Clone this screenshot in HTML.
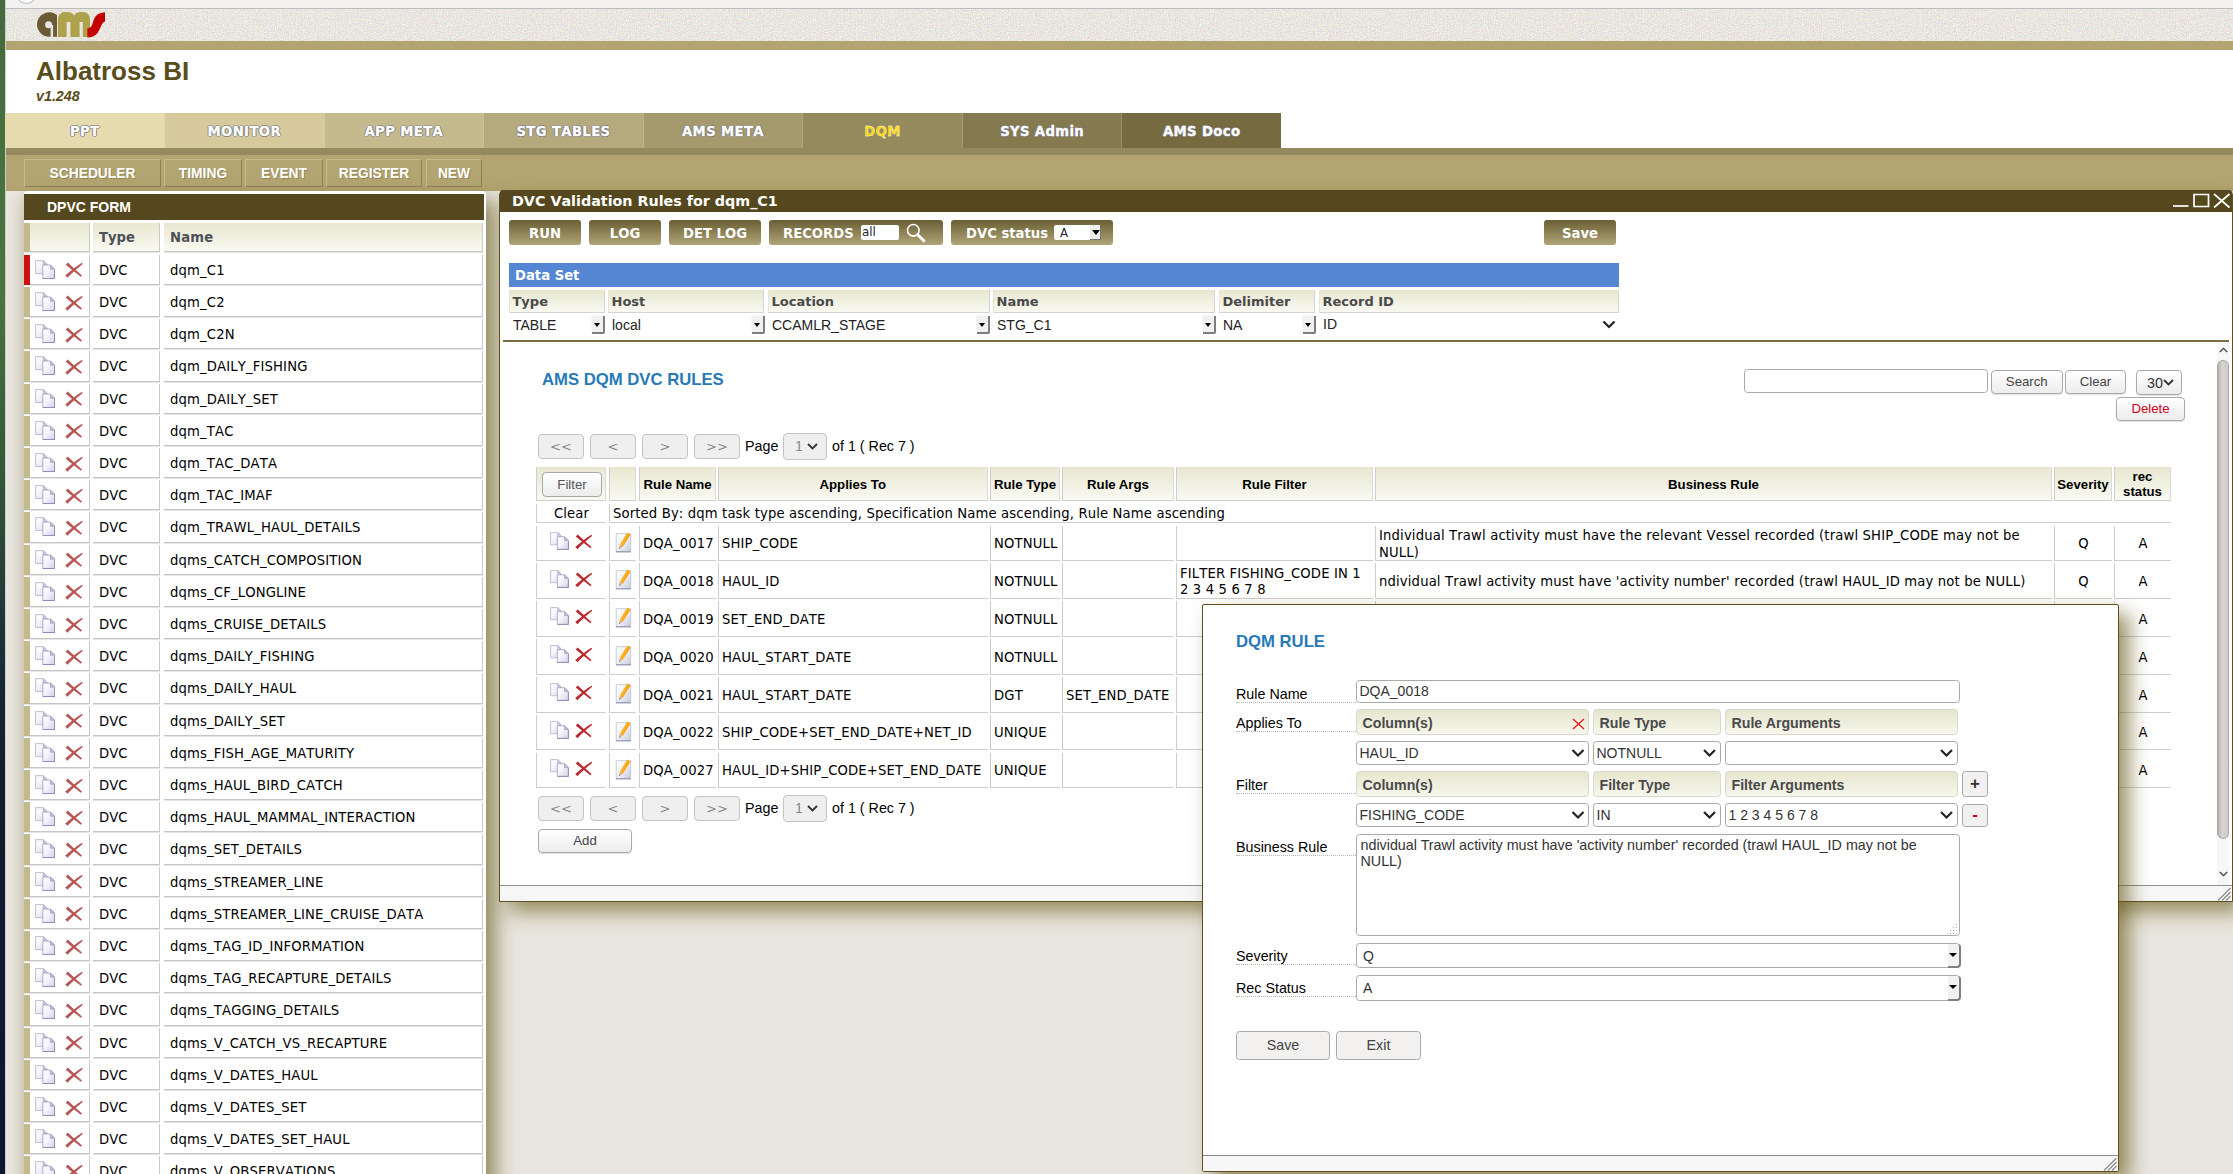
<!DOCTYPE html>
<html lang="en">
<head>
<meta charset="utf-8">
<title>Albatross BI</title>
<style>
*{box-sizing:border-box;margin:0;padding:0}
html,body{width:2233px;height:1174px;overflow:hidden}
body{position:relative;background:#e9e6df;font-family:"Liberation Sans",sans-serif;font-size:14.3px;color:#000}
.abs{position:absolute}
.dv{font-family:"DejaVu Sans","Liberation Sans",sans-serif;font-size:13.2px;font-kerning:none}
#stripe{left:0;top:0;width:6px;height:1174px;background:linear-gradient(#456a3e 0,#48753f 25%,#2f4f38 43.7%,#1f3538 52.8%,#152434 60%,#101c30 68%,#0f1630 100%);border-right:1px solid #cfcdc8}
#chrome{left:6px;top:0;width:2227px;height:9px;background:#f3f1ef;border-bottom:1px solid #bcbcbc;overflow:hidden}
#chrome i{position:absolute;left:9.5px;top:-19.5px;width:21.5px;height:23px;border:1px solid #c4c4c4;border-radius:50%;background:#fbfbfb}
#texture{left:6px;top:9px;width:2227px;height:32px;background:#e9e6e0}
#tan1{left:6px;top:41px;width:2227px;height:9px;background:#b3a571}
#white{left:6px;top:50px;width:2227px;height:98px;background:#fff}
#title{left:36px;top:56px;font-size:26px;font-weight:bold;color:#5a4d1c;line-height:30px;white-space:nowrap}
#ver{left:36px;top:87px;font-size:14.3px;font-weight:bold;font-style:italic;color:#5a4d1c;line-height:18px}
#nav{left:5.4px;top:113px;height:35px;width:1275.6px;display:flex}
#nav div{flex:1 1 0;height:35px;line-height:37px;font-kerning:none;text-align:center;font-family:"DejaVu Sans",sans-serif;font-weight:bold;font-size:13.2px;letter-spacing:.4px;color:#fff;-webkit-text-stroke:.3px #fff;text-shadow:1px 0 0 #777,-1px 0 0 #777,0 1px 0 #777,0 -1px 0 #777;border-left:1px solid rgba(255,255,255,.25)}
#nav div:first-child{border-left:0}
#dark{left:6px;top:148px;width:2227px;height:7px;background:#958a5e}
#tan2{left:6px;top:155px;width:2227px;height:36px;background:#b3a571}
.sub{top:159px;height:28px;line-height:27px;text-align:center;color:#fff;font-weight:bold;font-size:13.8px;border:1px solid;border-color:#c7bb8b #8d8152 #8d8152 #c7bb8b;text-shadow:1px 1px 0 rgba(90,77,28,.35)}
/* left panel */
#lp{left:24px;top:191px;width:462px;height:1000px;background:#fff;border-radius:4px 4px 0 0;box-shadow:10px 10px 20px rgba(100,85,20,.62),-6px 6px 12px rgba(100,85,20,.12)}
#lph{left:24px;top:194px;width:460px;height:25.5px;background:#56481e;color:#fff;font-weight:bold;font-size:14px;line-height:27.5px;padding-left:23px;overflow:hidden}
.lc{height:30.3px;line-height:31px;border-right:1px solid #cacaca;border-bottom:1px solid #c6c6c6;box-shadow:0 1px 0 #e6e6e6;white-space:nowrap;overflow:hidden}
.lc1{left:24px;width:66px;border:0;--st:#c3b98b;background:linear-gradient(90deg,var(--st) 0,var(--st) 6px,transparent 6px),linear-gradient(0deg,#c6c6c6 0,#c6c6c6 1px,transparent 1px),linear-gradient(270deg,#cacaca 0,#cacaca 1px,transparent 1px)}
.lc1.sel{--st:#cc1111}
.lc1.hc{background:linear-gradient(90deg,var(--st) 0,var(--st) 6px,transparent 6px),linear-gradient(0deg,#c6c6c6 0,#c6c6c6 1px,transparent 1px),linear-gradient(270deg,#cacaca 0,#cacaca 1px,transparent 1px),linear-gradient(#e7e7d0,#f9f9f2)}
.lc2{left:93px;width:66.8px;padding-left:6px}
.lc3{left:164px;width:319px;padding-left:6px;letter-spacing:.15px}
.hc{background:linear-gradient(#e7e7d0,#f9f9f2)}
.lth{font-weight:bold;color:#4f5158;line-height:30.5px}
/* window */
#win{left:499px;top:190px;width:1734px;height:712px;background:#fff;border:1px solid #5d4f20;border-radius:5px 5px 0 0;box-shadow:10px 10px 20px rgba(100,85,20,.62)}
#wtitle{left:500px;top:190px;width:1732px;height:21.5px;background:#56481e;border-radius:3px 3px 0 0;color:#fff;font-family:"DejaVu Sans",sans-serif;font-weight:bold;font-size:14.3px;line-height:23px;padding-left:12px;font-kerning:none;overflow:hidden}
.gb{top:220px;height:25px;border-radius:3px;background:linear-gradient(#6a5e34,#b0a478);color:#fff;font-family:"DejaVu Sans",sans-serif;font-weight:bold;font-size:13.2px;line-height:28px;text-align:center;white-space:nowrap;font-kerning:none;overflow:hidden}
#dsbar{left:509px;top:263px;width:1110px;height:24px;background:#5586d4;color:#fff;font-family:"DejaVu Sans",sans-serif;font-weight:bold;font-size:13.2px;line-height:26px;padding-left:6px;font-kerning:none;overflow:hidden}
.dh{top:290px;height:22.5px;line-height:23px;padding-left:2.5px;overflow:hidden;font-kerning:none;font-family:"DejaVu Sans",sans-serif;font-weight:bold;font-size:13px;color:#4a4a4a;border:1px solid #d4d4d4;border-top:0;border-left-color:#e4e4da}
.os{top:314px;height:22px;line-height:22px;font-size:14px;color:#222;padding-left:4px;white-space:nowrap}
.os i{position:absolute;right:-.5px;top:2.4px;width:12.6px;height:17.6px;border-right:2px solid #7d7d7d;border-bottom:2px solid #7d7d7d;border-bottom-right-radius:2.5px;background:#f1f0ef;box-shadow:-1px -1px 1px rgba(0,0,0,.04)}
.os i:after{content:"";position:absolute;left:1.6px;top:6.4px;border:3.9px solid transparent;border-top:4.2px solid #000;border-bottom:0}
#divider{left:503px;top:340px;width:1726px;height:2px;background:#7a6e42}
.btn{border:1px solid #a9a9a9;border-radius:4px;background:linear-gradient(#fff,#ececec);text-align:center;color:#444;font-size:13.2px;white-space:nowrap}
.pbtn{border:1px solid #c4c4c4;border-radius:4px;background:#efefef;text-align:center;color:#888;font-size:13px;width:46px;height:25px;line-height:23px;font-family:"DejaVu Sans",sans-serif}
.psel{border:1px solid #c4c4c4;border-radius:4px;background:#efefef;color:#888;font-size:14px;width:44px;height:27px;line-height:25px;padding-left:11px}
.chev{position:absolute;width:9px;height:9px}
/* rules table */
.rc{border-left:1px solid #cdcdcd;border-bottom:1px solid #cdcdcd;display:flex;align-items:center;padding:3.5px 0 0 3px;line-height:16.5px;white-space:nowrap;overflow:hidden}
.rc.hc{border-right:1px solid #dadada;justify-content:center;text-align:center;padding:2px 0 0 0;font-family:"Liberation Sans",sans-serif;font-weight:bold;font-size:13.2px;line-height:15px}
.rc.dv{letter-spacing:.14px}
.rc.ctr{justify-content:center;padding:3.5px 0 0 0}
.rc.br,.rc.rf{white-space:normal}
.rc.rf{padding-right:7px}
.rc.br{letter-spacing:.15px}

/* dialog */
#dlg{left:1202px;top:604px;width:917px;height:568px;background:#fff;border:1px solid #5d4f20;border-radius:2px;box-shadow:10px 10px 20px rgba(100,85,20,.66)}
#dlgf{left:1203px;top:1155px;width:915px;height:16px;background:#f7f7f7;border-top:1px solid #8a8a8a}
.lbl{left:1236px;width:120px;height:19px;line-height:21px;border-bottom:1px dotted #b5b5b5;font-size:14.3px;white-space:nowrap}
.inp{border:1px solid #a9a9a9;border-radius:3.5px;background:#fff;font-size:14px;color:#333;padding-left:2.5px;white-space:nowrap;overflow:hidden}
.dhd{height:26px;line-height:26.5px;border:1px solid #d8d8cc;border-radius:3.5px;background:linear-gradient(#e6e6cf,#f6f6ec);font-weight:bold;font-size:14.2px;color:#4a4a4a;padding-left:5.5px;white-space:nowrap}
.dsel{height:24px;line-height:22px}

.oarr{width:13.2px;background:#f3f2f1;border-right:2.3px solid #808080;border-bottom:2.5px solid #808080;border-radius:0 3px 4px 0}
.oarr:after{content:"";position:absolute;left:1.5px;top:9px;border:4.2px solid transparent;border-top:4.6px solid #000;border-bottom:0}

</style>
</head>
<body>
<svg width="0" height="0" style="position:absolute"><defs><linearGradient id="gp" x1="0" y1="0" x2="1" y2="1"><stop offset="0" stop-color="#fff"/><stop offset=".45" stop-color="#f4f4fb"/><stop offset="1" stop-color="#d2d2ea"/></linearGradient><linearGradient id="ge" x1="0" y1="0" x2="1" y2="1"><stop offset="0" stop-color="#fff"/><stop offset=".5" stop-color="#eef0f6"/><stop offset="1" stop-color="#c4c9d8"/></linearGradient><linearGradient id="gy" x1="0" y1="0" x2="1" y2=".6"><stop offset="0" stop-color="#ffe27a"/><stop offset=".5" stop-color="#fbb424"/><stop offset="1" stop-color="#f08a0c"/></linearGradient></defs></svg>
<div id="stripe" class="abs"></div>
<div id="chrome" class="abs"><i></i></div>
<div id="texture" class="abs"><svg width="2227" height="32" style="display:block"><filter id="nz" x="0" y="0" width="100%" height="100%" color-interpolation-filters="sRGB"><feTurbulence type="fractalNoise" baseFrequency=".85" numOctaves="2" seed="3"/><feColorMatrix type="matrix" values=".3 0 0 0 .765  0 .3 0 0 .752  0 0 .3 0 .728  0 0 0 0 1"/></filter><rect width="2227" height="32" filter="url(#nz)"/></svg></div>
<div id="tan1" class="abs"></div>
<div id="white" class="abs"></div>
<svg class="abs" style="left:36px;top:11px" width="71" height="28" viewBox="0 0 71 28" role="img" aria-label="ams logo">
<path d="M21 3.900A12.300 12.300 0 1 0 13.300 25.800L21 25.800z" fill="#6b5a35"/>
<circle cx="12.600" cy="13.700" r="3.500" fill="#e9e6e0"/>
<path d="M14.600 14h2.500v12h-2.500z" fill="#e9e6e0"/>
<path d="M22 26V7.500A6.500 6.500 0 0 1 28.500 1H32.300A6.500 6.500 0 0 1 38.800 7.500V26zM37.300 26V7.500A6.500 6.500 0 0 1 43.800 1H47.500A6.500 6.500 0 0 1 54 7.500V26z" fill="#aea24c"/>
<path d="M30.600 11h3.800v15.200h-3.800zM43.600 11h3.200v15.200h-3.200z" fill="#e9e6e0"/>
<path d="M69 1.200V10.500L66.700 12C64.500 15 64 19 61.500 22C59 25 55.500 26.500 51.400 26.500V17.500C54 17 55.800 15.500 56.800 12C57.800 8.500 59 4.500 63 2.800C65 2 67 1.500 69 1.200z" fill="#c40000"/>
</svg>
<div id="title" class="abs">Albatross BI</div>
<div id="ver" class="abs">v1.248</div>
<div id="nav" class="abs">
<div style="background:#e6dbae">PPT</div><div style="background:#d6ca9c">MONITOR</div><div style="background:#c5ba8d">APP META</div><div style="background:#b5aa7d">STG TABLES</div><div style="background:#a59a6e">AMS META</div><div style="background:#958a5e;color:#ffd700;text-shadow:none">DQM</div><div style="background:#857a4f">SYS Admin</div><div style="background:#756a40">AMS Doco</div>
</div>
<div id="dark" class="abs"></div>
<div id="tan2" class="abs"></div>
<div class="abs sub" style="left:24px;width:137px">SCHEDULER</div>
<div class="abs sub" style="left:164px;width:78px">TIMING</div>
<div class="abs sub" style="left:245px;width:78px">EVENT</div>
<div class="abs sub" style="left:326px;width:96px">REGISTER</div>
<div class="abs sub" style="left:426px;width:56px">NEW</div>
<div id="lp" class="abs"></div>
<div id="lph" class="abs">DPVC FORM</div>
<div class="abs lc hc lc1" style="top:223px;height:28.5px"></div>
<div class="abs lc hc lc2 dv lth" style="top:223px;height:28.5px">Type</div>
<div class="abs lc hc lc3 dv lth" style="top:223px;height:28.5px">Name</div>
<div class="abs lc lc1 sel" style="top:254.8px"></div>
<svg class="abs" style="left:34.5px;top:259.8px" width="20.6" height="19.6" viewBox="0 0 20 19"><path d="M.6 .6h7.400l4 4v8.600h-11.400z" fill="url(#gp)" stroke="#b9b9d2" stroke-width=".9"/><path d="M8 .6v4h4z" fill="#c9c9e0" stroke="#a9a9c8" stroke-width=".7"/><path d="M7.600 4.900h7.400l4 4v9.100h-11.400z" fill="url(#gp)" stroke="#a8a8c8" stroke-width=".9"/><path d="M15 4.900v4h4z" fill="#bfbfdc" stroke="#9c9cc0" stroke-width=".7"/><path d="M19 9.500v8.500h-11.400" fill="none" stroke="#8e8eb8" stroke-width="1"/></svg>
<svg class="abs" style="left:64.5px;top:262.4px;opacity:0.85" width="18.0" height="16.0" viewBox="0 0 18 16" fill="#ac3a3a"><path d="M.7 2.700L2.800 .5C7.200 4.600 12.200 9.400 17 13.400L15.900 14.700C10.600 10.700 5.400 6.700 .7 2.700z"/><path d="M16.900 .8L17.700 1.900C12.200 6.200 6.300 11.600 2.500 15.700L.2 13.500C5 9.400 10.900 4.400 16.900 .8z"/></svg>
<div class="abs lc lc2 dv" style="top:254.8px">DVC</div>
<div class="abs lc lc3 dv" style="top:254.8px">dqm_C1</div>
<div class="abs lc lc1" style="top:287.0px"></div>
<svg class="abs" style="left:34.5px;top:292.0px" width="20.6" height="19.6" viewBox="0 0 20 19"><path d="M.6 .6h7.400l4 4v8.600h-11.400z" fill="url(#gp)" stroke="#b9b9d2" stroke-width=".9"/><path d="M8 .6v4h4z" fill="#c9c9e0" stroke="#a9a9c8" stroke-width=".7"/><path d="M7.600 4.900h7.400l4 4v9.100h-11.400z" fill="url(#gp)" stroke="#a8a8c8" stroke-width=".9"/><path d="M15 4.900v4h4z" fill="#bfbfdc" stroke="#9c9cc0" stroke-width=".7"/><path d="M19 9.500v8.500h-11.400" fill="none" stroke="#8e8eb8" stroke-width="1"/></svg>
<svg class="abs" style="left:64.5px;top:294.6px;opacity:0.85" width="18.0" height="16.0" viewBox="0 0 18 16" fill="#ac3a3a"><path d="M.7 2.700L2.800 .5C7.200 4.600 12.200 9.400 17 13.400L15.900 14.700C10.600 10.700 5.400 6.700 .7 2.700z"/><path d="M16.900 .8L17.700 1.900C12.200 6.200 6.300 11.600 2.500 15.700L.2 13.500C5 9.400 10.900 4.400 16.900 .8z"/></svg>
<div class="abs lc lc2 dv" style="top:287.0px">DVC</div>
<div class="abs lc lc3 dv" style="top:287.0px">dqm_C2</div>
<div class="abs lc lc1" style="top:319.2px"></div>
<svg class="abs" style="left:34.5px;top:324.2px" width="20.6" height="19.6" viewBox="0 0 20 19"><path d="M.6 .6h7.400l4 4v8.600h-11.400z" fill="url(#gp)" stroke="#b9b9d2" stroke-width=".9"/><path d="M8 .6v4h4z" fill="#c9c9e0" stroke="#a9a9c8" stroke-width=".7"/><path d="M7.600 4.900h7.400l4 4v9.100h-11.400z" fill="url(#gp)" stroke="#a8a8c8" stroke-width=".9"/><path d="M15 4.900v4h4z" fill="#bfbfdc" stroke="#9c9cc0" stroke-width=".7"/><path d="M19 9.500v8.500h-11.400" fill="none" stroke="#8e8eb8" stroke-width="1"/></svg>
<svg class="abs" style="left:64.5px;top:326.8px;opacity:0.85" width="18.0" height="16.0" viewBox="0 0 18 16" fill="#ac3a3a"><path d="M.7 2.700L2.800 .5C7.200 4.600 12.200 9.400 17 13.400L15.900 14.700C10.600 10.700 5.400 6.700 .7 2.700z"/><path d="M16.900 .8L17.700 1.900C12.200 6.200 6.300 11.600 2.500 15.700L.2 13.500C5 9.400 10.900 4.400 16.900 .8z"/></svg>
<div class="abs lc lc2 dv" style="top:319.2px">DVC</div>
<div class="abs lc lc3 dv" style="top:319.2px">dqm_C2N</div>
<div class="abs lc lc1" style="top:351.4px"></div>
<svg class="abs" style="left:34.5px;top:356.4px" width="20.6" height="19.6" viewBox="0 0 20 19"><path d="M.6 .6h7.400l4 4v8.600h-11.400z" fill="url(#gp)" stroke="#b9b9d2" stroke-width=".9"/><path d="M8 .6v4h4z" fill="#c9c9e0" stroke="#a9a9c8" stroke-width=".7"/><path d="M7.600 4.900h7.400l4 4v9.100h-11.400z" fill="url(#gp)" stroke="#a8a8c8" stroke-width=".9"/><path d="M15 4.900v4h4z" fill="#bfbfdc" stroke="#9c9cc0" stroke-width=".7"/><path d="M19 9.500v8.500h-11.400" fill="none" stroke="#8e8eb8" stroke-width="1"/></svg>
<svg class="abs" style="left:64.5px;top:359.0px;opacity:0.85" width="18.0" height="16.0" viewBox="0 0 18 16" fill="#ac3a3a"><path d="M.7 2.700L2.800 .5C7.200 4.600 12.200 9.400 17 13.400L15.900 14.700C10.600 10.700 5.400 6.700 .7 2.700z"/><path d="M16.900 .8L17.700 1.900C12.200 6.200 6.300 11.600 2.500 15.700L.2 13.500C5 9.400 10.900 4.400 16.900 .8z"/></svg>
<div class="abs lc lc2 dv" style="top:351.4px">DVC</div>
<div class="abs lc lc3 dv" style="top:351.4px">dqm_DAILY_FISHING</div>
<div class="abs lc lc1" style="top:383.6px"></div>
<svg class="abs" style="left:34.5px;top:388.6px" width="20.6" height="19.6" viewBox="0 0 20 19"><path d="M.6 .6h7.400l4 4v8.600h-11.400z" fill="url(#gp)" stroke="#b9b9d2" stroke-width=".9"/><path d="M8 .6v4h4z" fill="#c9c9e0" stroke="#a9a9c8" stroke-width=".7"/><path d="M7.600 4.900h7.400l4 4v9.100h-11.400z" fill="url(#gp)" stroke="#a8a8c8" stroke-width=".9"/><path d="M15 4.900v4h4z" fill="#bfbfdc" stroke="#9c9cc0" stroke-width=".7"/><path d="M19 9.500v8.500h-11.400" fill="none" stroke="#8e8eb8" stroke-width="1"/></svg>
<svg class="abs" style="left:64.5px;top:391.2px;opacity:0.85" width="18.0" height="16.0" viewBox="0 0 18 16" fill="#ac3a3a"><path d="M.7 2.700L2.800 .5C7.200 4.600 12.200 9.400 17 13.400L15.900 14.700C10.600 10.700 5.400 6.700 .7 2.700z"/><path d="M16.900 .8L17.700 1.900C12.200 6.200 6.300 11.600 2.500 15.700L.2 13.500C5 9.400 10.900 4.400 16.900 .8z"/></svg>
<div class="abs lc lc2 dv" style="top:383.6px">DVC</div>
<div class="abs lc lc3 dv" style="top:383.6px">dqm_DAILY_SET</div>
<div class="abs lc lc1" style="top:415.8px"></div>
<svg class="abs" style="left:34.5px;top:420.8px" width="20.6" height="19.6" viewBox="0 0 20 19"><path d="M.6 .6h7.400l4 4v8.600h-11.400z" fill="url(#gp)" stroke="#b9b9d2" stroke-width=".9"/><path d="M8 .6v4h4z" fill="#c9c9e0" stroke="#a9a9c8" stroke-width=".7"/><path d="M7.600 4.900h7.400l4 4v9.100h-11.400z" fill="url(#gp)" stroke="#a8a8c8" stroke-width=".9"/><path d="M15 4.900v4h4z" fill="#bfbfdc" stroke="#9c9cc0" stroke-width=".7"/><path d="M19 9.500v8.500h-11.400" fill="none" stroke="#8e8eb8" stroke-width="1"/></svg>
<svg class="abs" style="left:64.5px;top:423.4px;opacity:0.85" width="18.0" height="16.0" viewBox="0 0 18 16" fill="#ac3a3a"><path d="M.7 2.700L2.800 .5C7.200 4.600 12.200 9.400 17 13.400L15.900 14.700C10.600 10.700 5.400 6.700 .7 2.700z"/><path d="M16.900 .8L17.700 1.900C12.200 6.200 6.300 11.600 2.500 15.700L.2 13.500C5 9.400 10.900 4.400 16.900 .8z"/></svg>
<div class="abs lc lc2 dv" style="top:415.8px">DVC</div>
<div class="abs lc lc3 dv" style="top:415.8px">dqm_TAC</div>
<div class="abs lc lc1" style="top:448.0px"></div>
<svg class="abs" style="left:34.5px;top:453.0px" width="20.6" height="19.6" viewBox="0 0 20 19"><path d="M.6 .6h7.400l4 4v8.600h-11.400z" fill="url(#gp)" stroke="#b9b9d2" stroke-width=".9"/><path d="M8 .6v4h4z" fill="#c9c9e0" stroke="#a9a9c8" stroke-width=".7"/><path d="M7.600 4.900h7.400l4 4v9.100h-11.400z" fill="url(#gp)" stroke="#a8a8c8" stroke-width=".9"/><path d="M15 4.900v4h4z" fill="#bfbfdc" stroke="#9c9cc0" stroke-width=".7"/><path d="M19 9.500v8.500h-11.400" fill="none" stroke="#8e8eb8" stroke-width="1"/></svg>
<svg class="abs" style="left:64.5px;top:455.6px;opacity:0.85" width="18.0" height="16.0" viewBox="0 0 18 16" fill="#ac3a3a"><path d="M.7 2.700L2.800 .5C7.200 4.600 12.200 9.400 17 13.400L15.900 14.700C10.600 10.700 5.400 6.700 .7 2.700z"/><path d="M16.900 .8L17.700 1.900C12.200 6.200 6.300 11.600 2.500 15.700L.2 13.500C5 9.400 10.900 4.400 16.900 .8z"/></svg>
<div class="abs lc lc2 dv" style="top:448.0px">DVC</div>
<div class="abs lc lc3 dv" style="top:448.0px">dqm_TAC_DATA</div>
<div class="abs lc lc1" style="top:480.2px"></div>
<svg class="abs" style="left:34.5px;top:485.2px" width="20.6" height="19.6" viewBox="0 0 20 19"><path d="M.6 .6h7.400l4 4v8.600h-11.400z" fill="url(#gp)" stroke="#b9b9d2" stroke-width=".9"/><path d="M8 .6v4h4z" fill="#c9c9e0" stroke="#a9a9c8" stroke-width=".7"/><path d="M7.600 4.900h7.400l4 4v9.100h-11.400z" fill="url(#gp)" stroke="#a8a8c8" stroke-width=".9"/><path d="M15 4.900v4h4z" fill="#bfbfdc" stroke="#9c9cc0" stroke-width=".7"/><path d="M19 9.500v8.500h-11.400" fill="none" stroke="#8e8eb8" stroke-width="1"/></svg>
<svg class="abs" style="left:64.5px;top:487.8px;opacity:0.85" width="18.0" height="16.0" viewBox="0 0 18 16" fill="#ac3a3a"><path d="M.7 2.700L2.800 .5C7.200 4.600 12.200 9.400 17 13.400L15.900 14.700C10.600 10.700 5.400 6.700 .7 2.700z"/><path d="M16.900 .8L17.700 1.900C12.200 6.200 6.300 11.600 2.500 15.700L.2 13.500C5 9.400 10.900 4.400 16.900 .8z"/></svg>
<div class="abs lc lc2 dv" style="top:480.2px">DVC</div>
<div class="abs lc lc3 dv" style="top:480.2px">dqm_TAC_IMAF</div>
<div class="abs lc lc1" style="top:512.4px"></div>
<svg class="abs" style="left:34.5px;top:517.4px" width="20.6" height="19.6" viewBox="0 0 20 19"><path d="M.6 .6h7.400l4 4v8.600h-11.400z" fill="url(#gp)" stroke="#b9b9d2" stroke-width=".9"/><path d="M8 .6v4h4z" fill="#c9c9e0" stroke="#a9a9c8" stroke-width=".7"/><path d="M7.600 4.900h7.400l4 4v9.100h-11.400z" fill="url(#gp)" stroke="#a8a8c8" stroke-width=".9"/><path d="M15 4.900v4h4z" fill="#bfbfdc" stroke="#9c9cc0" stroke-width=".7"/><path d="M19 9.500v8.500h-11.400" fill="none" stroke="#8e8eb8" stroke-width="1"/></svg>
<svg class="abs" style="left:64.5px;top:520.0px;opacity:0.85" width="18.0" height="16.0" viewBox="0 0 18 16" fill="#ac3a3a"><path d="M.7 2.700L2.800 .5C7.200 4.600 12.200 9.400 17 13.400L15.900 14.700C10.600 10.700 5.400 6.700 .7 2.700z"/><path d="M16.900 .8L17.700 1.900C12.200 6.200 6.300 11.600 2.500 15.700L.2 13.500C5 9.400 10.900 4.400 16.900 .8z"/></svg>
<div class="abs lc lc2 dv" style="top:512.4px">DVC</div>
<div class="abs lc lc3 dv" style="top:512.4px">dqm_TRAWL_HAUL_DETAILS</div>
<div class="abs lc lc1" style="top:544.6px"></div>
<svg class="abs" style="left:34.5px;top:549.6px" width="20.6" height="19.6" viewBox="0 0 20 19"><path d="M.6 .6h7.400l4 4v8.600h-11.400z" fill="url(#gp)" stroke="#b9b9d2" stroke-width=".9"/><path d="M8 .6v4h4z" fill="#c9c9e0" stroke="#a9a9c8" stroke-width=".7"/><path d="M7.600 4.900h7.400l4 4v9.100h-11.400z" fill="url(#gp)" stroke="#a8a8c8" stroke-width=".9"/><path d="M15 4.900v4h4z" fill="#bfbfdc" stroke="#9c9cc0" stroke-width=".7"/><path d="M19 9.500v8.500h-11.400" fill="none" stroke="#8e8eb8" stroke-width="1"/></svg>
<svg class="abs" style="left:64.5px;top:552.2px;opacity:0.85" width="18.0" height="16.0" viewBox="0 0 18 16" fill="#ac3a3a"><path d="M.7 2.700L2.800 .5C7.200 4.600 12.200 9.400 17 13.400L15.900 14.700C10.600 10.700 5.400 6.700 .7 2.700z"/><path d="M16.900 .8L17.700 1.900C12.200 6.200 6.300 11.600 2.500 15.700L.2 13.500C5 9.400 10.900 4.400 16.900 .8z"/></svg>
<div class="abs lc lc2 dv" style="top:544.6px">DVC</div>
<div class="abs lc lc3 dv" style="top:544.6px">dqms_CATCH_COMPOSITION</div>
<div class="abs lc lc1" style="top:576.8px"></div>
<svg class="abs" style="left:34.5px;top:581.8px" width="20.6" height="19.6" viewBox="0 0 20 19"><path d="M.6 .6h7.400l4 4v8.600h-11.400z" fill="url(#gp)" stroke="#b9b9d2" stroke-width=".9"/><path d="M8 .6v4h4z" fill="#c9c9e0" stroke="#a9a9c8" stroke-width=".7"/><path d="M7.600 4.900h7.400l4 4v9.100h-11.400z" fill="url(#gp)" stroke="#a8a8c8" stroke-width=".9"/><path d="M15 4.900v4h4z" fill="#bfbfdc" stroke="#9c9cc0" stroke-width=".7"/><path d="M19 9.500v8.500h-11.400" fill="none" stroke="#8e8eb8" stroke-width="1"/></svg>
<svg class="abs" style="left:64.5px;top:584.4px;opacity:0.85" width="18.0" height="16.0" viewBox="0 0 18 16" fill="#ac3a3a"><path d="M.7 2.700L2.800 .5C7.200 4.600 12.200 9.400 17 13.400L15.900 14.700C10.600 10.700 5.400 6.700 .7 2.700z"/><path d="M16.900 .8L17.700 1.900C12.200 6.200 6.300 11.600 2.500 15.700L.2 13.500C5 9.400 10.900 4.400 16.900 .8z"/></svg>
<div class="abs lc lc2 dv" style="top:576.8px">DVC</div>
<div class="abs lc lc3 dv" style="top:576.8px">dqms_CF_LONGLINE</div>
<div class="abs lc lc1" style="top:609.0px"></div>
<svg class="abs" style="left:34.5px;top:614.0px" width="20.6" height="19.6" viewBox="0 0 20 19"><path d="M.6 .6h7.400l4 4v8.600h-11.400z" fill="url(#gp)" stroke="#b9b9d2" stroke-width=".9"/><path d="M8 .6v4h4z" fill="#c9c9e0" stroke="#a9a9c8" stroke-width=".7"/><path d="M7.600 4.900h7.400l4 4v9.100h-11.400z" fill="url(#gp)" stroke="#a8a8c8" stroke-width=".9"/><path d="M15 4.900v4h4z" fill="#bfbfdc" stroke="#9c9cc0" stroke-width=".7"/><path d="M19 9.500v8.500h-11.400" fill="none" stroke="#8e8eb8" stroke-width="1"/></svg>
<svg class="abs" style="left:64.5px;top:616.6px;opacity:0.85" width="18.0" height="16.0" viewBox="0 0 18 16" fill="#ac3a3a"><path d="M.7 2.700L2.800 .5C7.200 4.600 12.200 9.400 17 13.400L15.900 14.700C10.600 10.700 5.400 6.700 .7 2.700z"/><path d="M16.900 .8L17.700 1.900C12.200 6.200 6.300 11.600 2.500 15.700L.2 13.500C5 9.400 10.900 4.400 16.900 .8z"/></svg>
<div class="abs lc lc2 dv" style="top:609.0px">DVC</div>
<div class="abs lc lc3 dv" style="top:609.0px">dqms_CRUISE_DETAILS</div>
<div class="abs lc lc1" style="top:641.2px"></div>
<svg class="abs" style="left:34.5px;top:646.2px" width="20.6" height="19.6" viewBox="0 0 20 19"><path d="M.6 .6h7.400l4 4v8.600h-11.400z" fill="url(#gp)" stroke="#b9b9d2" stroke-width=".9"/><path d="M8 .6v4h4z" fill="#c9c9e0" stroke="#a9a9c8" stroke-width=".7"/><path d="M7.600 4.900h7.400l4 4v9.100h-11.400z" fill="url(#gp)" stroke="#a8a8c8" stroke-width=".9"/><path d="M15 4.900v4h4z" fill="#bfbfdc" stroke="#9c9cc0" stroke-width=".7"/><path d="M19 9.500v8.500h-11.400" fill="none" stroke="#8e8eb8" stroke-width="1"/></svg>
<svg class="abs" style="left:64.5px;top:648.8px;opacity:0.85" width="18.0" height="16.0" viewBox="0 0 18 16" fill="#ac3a3a"><path d="M.7 2.700L2.800 .5C7.200 4.600 12.200 9.400 17 13.400L15.900 14.700C10.600 10.700 5.400 6.700 .7 2.700z"/><path d="M16.900 .8L17.700 1.900C12.200 6.200 6.300 11.600 2.500 15.700L.2 13.500C5 9.400 10.900 4.400 16.900 .8z"/></svg>
<div class="abs lc lc2 dv" style="top:641.2px">DVC</div>
<div class="abs lc lc3 dv" style="top:641.2px">dqms_DAILY_FISHING</div>
<div class="abs lc lc1" style="top:673.4px"></div>
<svg class="abs" style="left:34.5px;top:678.4px" width="20.6" height="19.6" viewBox="0 0 20 19"><path d="M.6 .6h7.400l4 4v8.600h-11.400z" fill="url(#gp)" stroke="#b9b9d2" stroke-width=".9"/><path d="M8 .6v4h4z" fill="#c9c9e0" stroke="#a9a9c8" stroke-width=".7"/><path d="M7.600 4.900h7.400l4 4v9.100h-11.400z" fill="url(#gp)" stroke="#a8a8c8" stroke-width=".9"/><path d="M15 4.900v4h4z" fill="#bfbfdc" stroke="#9c9cc0" stroke-width=".7"/><path d="M19 9.500v8.500h-11.400" fill="none" stroke="#8e8eb8" stroke-width="1"/></svg>
<svg class="abs" style="left:64.5px;top:681.0px;opacity:0.85" width="18.0" height="16.0" viewBox="0 0 18 16" fill="#ac3a3a"><path d="M.7 2.700L2.800 .5C7.200 4.600 12.200 9.400 17 13.400L15.900 14.700C10.600 10.700 5.400 6.700 .7 2.700z"/><path d="M16.900 .8L17.700 1.900C12.200 6.200 6.300 11.600 2.500 15.700L.2 13.500C5 9.400 10.900 4.400 16.900 .8z"/></svg>
<div class="abs lc lc2 dv" style="top:673.4px">DVC</div>
<div class="abs lc lc3 dv" style="top:673.4px">dqms_DAILY_HAUL</div>
<div class="abs lc lc1" style="top:705.6px"></div>
<svg class="abs" style="left:34.5px;top:710.6px" width="20.6" height="19.6" viewBox="0 0 20 19"><path d="M.6 .6h7.400l4 4v8.600h-11.400z" fill="url(#gp)" stroke="#b9b9d2" stroke-width=".9"/><path d="M8 .6v4h4z" fill="#c9c9e0" stroke="#a9a9c8" stroke-width=".7"/><path d="M7.600 4.900h7.400l4 4v9.100h-11.400z" fill="url(#gp)" stroke="#a8a8c8" stroke-width=".9"/><path d="M15 4.900v4h4z" fill="#bfbfdc" stroke="#9c9cc0" stroke-width=".7"/><path d="M19 9.500v8.500h-11.400" fill="none" stroke="#8e8eb8" stroke-width="1"/></svg>
<svg class="abs" style="left:64.5px;top:713.2px;opacity:0.85" width="18.0" height="16.0" viewBox="0 0 18 16" fill="#ac3a3a"><path d="M.7 2.700L2.800 .5C7.200 4.600 12.200 9.400 17 13.400L15.900 14.700C10.600 10.700 5.400 6.700 .7 2.700z"/><path d="M16.900 .8L17.700 1.900C12.200 6.200 6.300 11.600 2.500 15.700L.2 13.500C5 9.400 10.900 4.400 16.900 .8z"/></svg>
<div class="abs lc lc2 dv" style="top:705.6px">DVC</div>
<div class="abs lc lc3 dv" style="top:705.6px">dqms_DAILY_SET</div>
<div class="abs lc lc1" style="top:737.8px"></div>
<svg class="abs" style="left:34.5px;top:742.8px" width="20.6" height="19.6" viewBox="0 0 20 19"><path d="M.6 .6h7.400l4 4v8.600h-11.400z" fill="url(#gp)" stroke="#b9b9d2" stroke-width=".9"/><path d="M8 .6v4h4z" fill="#c9c9e0" stroke="#a9a9c8" stroke-width=".7"/><path d="M7.600 4.900h7.400l4 4v9.100h-11.400z" fill="url(#gp)" stroke="#a8a8c8" stroke-width=".9"/><path d="M15 4.900v4h4z" fill="#bfbfdc" stroke="#9c9cc0" stroke-width=".7"/><path d="M19 9.500v8.500h-11.400" fill="none" stroke="#8e8eb8" stroke-width="1"/></svg>
<svg class="abs" style="left:64.5px;top:745.4px;opacity:0.85" width="18.0" height="16.0" viewBox="0 0 18 16" fill="#ac3a3a"><path d="M.7 2.700L2.800 .5C7.200 4.600 12.200 9.400 17 13.400L15.900 14.700C10.600 10.700 5.400 6.700 .7 2.700z"/><path d="M16.900 .8L17.700 1.900C12.200 6.200 6.300 11.600 2.500 15.700L.2 13.500C5 9.400 10.900 4.400 16.900 .8z"/></svg>
<div class="abs lc lc2 dv" style="top:737.8px">DVC</div>
<div class="abs lc lc3 dv" style="top:737.8px">dqms_FISH_AGE_MATURITY</div>
<div class="abs lc lc1" style="top:770.0px"></div>
<svg class="abs" style="left:34.5px;top:775.0px" width="20.6" height="19.6" viewBox="0 0 20 19"><path d="M.6 .6h7.400l4 4v8.600h-11.400z" fill="url(#gp)" stroke="#b9b9d2" stroke-width=".9"/><path d="M8 .6v4h4z" fill="#c9c9e0" stroke="#a9a9c8" stroke-width=".7"/><path d="M7.600 4.900h7.400l4 4v9.100h-11.400z" fill="url(#gp)" stroke="#a8a8c8" stroke-width=".9"/><path d="M15 4.900v4h4z" fill="#bfbfdc" stroke="#9c9cc0" stroke-width=".7"/><path d="M19 9.500v8.500h-11.400" fill="none" stroke="#8e8eb8" stroke-width="1"/></svg>
<svg class="abs" style="left:64.5px;top:777.6px;opacity:0.85" width="18.0" height="16.0" viewBox="0 0 18 16" fill="#ac3a3a"><path d="M.7 2.700L2.800 .5C7.200 4.600 12.200 9.400 17 13.400L15.900 14.700C10.600 10.700 5.400 6.700 .7 2.700z"/><path d="M16.900 .8L17.700 1.900C12.200 6.200 6.300 11.600 2.500 15.700L.2 13.500C5 9.400 10.900 4.400 16.900 .8z"/></svg>
<div class="abs lc lc2 dv" style="top:770.0px">DVC</div>
<div class="abs lc lc3 dv" style="top:770.0px">dqms_HAUL_BIRD_CATCH</div>
<div class="abs lc lc1" style="top:802.2px"></div>
<svg class="abs" style="left:34.5px;top:807.2px" width="20.6" height="19.6" viewBox="0 0 20 19"><path d="M.6 .6h7.400l4 4v8.600h-11.400z" fill="url(#gp)" stroke="#b9b9d2" stroke-width=".9"/><path d="M8 .6v4h4z" fill="#c9c9e0" stroke="#a9a9c8" stroke-width=".7"/><path d="M7.600 4.900h7.400l4 4v9.100h-11.400z" fill="url(#gp)" stroke="#a8a8c8" stroke-width=".9"/><path d="M15 4.900v4h4z" fill="#bfbfdc" stroke="#9c9cc0" stroke-width=".7"/><path d="M19 9.500v8.500h-11.400" fill="none" stroke="#8e8eb8" stroke-width="1"/></svg>
<svg class="abs" style="left:64.5px;top:809.8px;opacity:0.85" width="18.0" height="16.0" viewBox="0 0 18 16" fill="#ac3a3a"><path d="M.7 2.700L2.800 .5C7.200 4.600 12.200 9.400 17 13.400L15.900 14.700C10.600 10.700 5.400 6.700 .7 2.700z"/><path d="M16.900 .8L17.700 1.900C12.200 6.200 6.300 11.600 2.500 15.700L.2 13.500C5 9.400 10.900 4.400 16.900 .8z"/></svg>
<div class="abs lc lc2 dv" style="top:802.2px">DVC</div>
<div class="abs lc lc3 dv" style="top:802.2px">dqms_HAUL_MAMMAL_INTERACTION</div>
<div class="abs lc lc1" style="top:834.4px"></div>
<svg class="abs" style="left:34.5px;top:839.4px" width="20.6" height="19.6" viewBox="0 0 20 19"><path d="M.6 .6h7.400l4 4v8.600h-11.400z" fill="url(#gp)" stroke="#b9b9d2" stroke-width=".9"/><path d="M8 .6v4h4z" fill="#c9c9e0" stroke="#a9a9c8" stroke-width=".7"/><path d="M7.600 4.900h7.400l4 4v9.100h-11.400z" fill="url(#gp)" stroke="#a8a8c8" stroke-width=".9"/><path d="M15 4.900v4h4z" fill="#bfbfdc" stroke="#9c9cc0" stroke-width=".7"/><path d="M19 9.500v8.500h-11.400" fill="none" stroke="#8e8eb8" stroke-width="1"/></svg>
<svg class="abs" style="left:64.5px;top:842.0px;opacity:0.85" width="18.0" height="16.0" viewBox="0 0 18 16" fill="#ac3a3a"><path d="M.7 2.700L2.800 .5C7.200 4.600 12.200 9.400 17 13.400L15.900 14.700C10.600 10.700 5.400 6.700 .7 2.700z"/><path d="M16.900 .8L17.700 1.900C12.200 6.200 6.300 11.600 2.500 15.700L.2 13.500C5 9.400 10.900 4.400 16.900 .8z"/></svg>
<div class="abs lc lc2 dv" style="top:834.4px">DVC</div>
<div class="abs lc lc3 dv" style="top:834.4px">dqms_SET_DETAILS</div>
<div class="abs lc lc1" style="top:866.6px"></div>
<svg class="abs" style="left:34.5px;top:871.6px" width="20.6" height="19.6" viewBox="0 0 20 19"><path d="M.6 .6h7.400l4 4v8.600h-11.400z" fill="url(#gp)" stroke="#b9b9d2" stroke-width=".9"/><path d="M8 .6v4h4z" fill="#c9c9e0" stroke="#a9a9c8" stroke-width=".7"/><path d="M7.600 4.900h7.400l4 4v9.100h-11.400z" fill="url(#gp)" stroke="#a8a8c8" stroke-width=".9"/><path d="M15 4.900v4h4z" fill="#bfbfdc" stroke="#9c9cc0" stroke-width=".7"/><path d="M19 9.500v8.500h-11.400" fill="none" stroke="#8e8eb8" stroke-width="1"/></svg>
<svg class="abs" style="left:64.5px;top:874.2px;opacity:0.85" width="18.0" height="16.0" viewBox="0 0 18 16" fill="#ac3a3a"><path d="M.7 2.700L2.800 .5C7.200 4.600 12.200 9.400 17 13.400L15.900 14.700C10.600 10.700 5.400 6.700 .7 2.700z"/><path d="M16.900 .8L17.700 1.900C12.200 6.200 6.300 11.600 2.500 15.700L.2 13.500C5 9.400 10.900 4.400 16.900 .8z"/></svg>
<div class="abs lc lc2 dv" style="top:866.6px">DVC</div>
<div class="abs lc lc3 dv" style="top:866.6px">dqms_STREAMER_LINE</div>
<div class="abs lc lc1" style="top:898.8px"></div>
<svg class="abs" style="left:34.5px;top:903.8px" width="20.6" height="19.6" viewBox="0 0 20 19"><path d="M.6 .6h7.400l4 4v8.600h-11.400z" fill="url(#gp)" stroke="#b9b9d2" stroke-width=".9"/><path d="M8 .6v4h4z" fill="#c9c9e0" stroke="#a9a9c8" stroke-width=".7"/><path d="M7.600 4.900h7.400l4 4v9.100h-11.400z" fill="url(#gp)" stroke="#a8a8c8" stroke-width=".9"/><path d="M15 4.900v4h4z" fill="#bfbfdc" stroke="#9c9cc0" stroke-width=".7"/><path d="M19 9.500v8.500h-11.400" fill="none" stroke="#8e8eb8" stroke-width="1"/></svg>
<svg class="abs" style="left:64.5px;top:906.4px;opacity:0.85" width="18.0" height="16.0" viewBox="0 0 18 16" fill="#ac3a3a"><path d="M.7 2.700L2.800 .5C7.200 4.600 12.200 9.400 17 13.400L15.900 14.700C10.600 10.700 5.400 6.700 .7 2.700z"/><path d="M16.900 .8L17.700 1.900C12.200 6.200 6.300 11.600 2.500 15.700L.2 13.500C5 9.400 10.900 4.400 16.900 .8z"/></svg>
<div class="abs lc lc2 dv" style="top:898.8px">DVC</div>
<div class="abs lc lc3 dv" style="top:898.8px">dqms_STREAMER_LINE_CRUISE_DATA</div>
<div class="abs lc lc1" style="top:931.0px"></div>
<svg class="abs" style="left:34.5px;top:936.0px" width="20.6" height="19.6" viewBox="0 0 20 19"><path d="M.6 .6h7.400l4 4v8.600h-11.400z" fill="url(#gp)" stroke="#b9b9d2" stroke-width=".9"/><path d="M8 .6v4h4z" fill="#c9c9e0" stroke="#a9a9c8" stroke-width=".7"/><path d="M7.600 4.900h7.400l4 4v9.100h-11.400z" fill="url(#gp)" stroke="#a8a8c8" stroke-width=".9"/><path d="M15 4.900v4h4z" fill="#bfbfdc" stroke="#9c9cc0" stroke-width=".7"/><path d="M19 9.500v8.500h-11.400" fill="none" stroke="#8e8eb8" stroke-width="1"/></svg>
<svg class="abs" style="left:64.5px;top:938.6px;opacity:0.85" width="18.0" height="16.0" viewBox="0 0 18 16" fill="#ac3a3a"><path d="M.7 2.700L2.800 .5C7.200 4.600 12.200 9.400 17 13.400L15.900 14.700C10.600 10.700 5.400 6.700 .7 2.700z"/><path d="M16.900 .8L17.700 1.900C12.200 6.200 6.300 11.600 2.500 15.700L.2 13.500C5 9.400 10.900 4.400 16.900 .8z"/></svg>
<div class="abs lc lc2 dv" style="top:931.0px">DVC</div>
<div class="abs lc lc3 dv" style="top:931.0px">dqms_TAG_ID_INFORMATION</div>
<div class="abs lc lc1" style="top:963.2px"></div>
<svg class="abs" style="left:34.5px;top:968.2px" width="20.6" height="19.6" viewBox="0 0 20 19"><path d="M.6 .6h7.400l4 4v8.600h-11.400z" fill="url(#gp)" stroke="#b9b9d2" stroke-width=".9"/><path d="M8 .6v4h4z" fill="#c9c9e0" stroke="#a9a9c8" stroke-width=".7"/><path d="M7.600 4.900h7.400l4 4v9.100h-11.400z" fill="url(#gp)" stroke="#a8a8c8" stroke-width=".9"/><path d="M15 4.900v4h4z" fill="#bfbfdc" stroke="#9c9cc0" stroke-width=".7"/><path d="M19 9.500v8.500h-11.400" fill="none" stroke="#8e8eb8" stroke-width="1"/></svg>
<svg class="abs" style="left:64.5px;top:970.8px;opacity:0.85" width="18.0" height="16.0" viewBox="0 0 18 16" fill="#ac3a3a"><path d="M.7 2.700L2.800 .5C7.200 4.600 12.200 9.400 17 13.400L15.900 14.700C10.600 10.700 5.400 6.700 .7 2.700z"/><path d="M16.900 .8L17.700 1.900C12.200 6.200 6.300 11.600 2.500 15.700L.2 13.500C5 9.400 10.900 4.400 16.900 .8z"/></svg>
<div class="abs lc lc2 dv" style="top:963.2px">DVC</div>
<div class="abs lc lc3 dv" style="top:963.2px">dqms_TAG_RECAPTURE_DETAILS</div>
<div class="abs lc lc1" style="top:995.4px"></div>
<svg class="abs" style="left:34.5px;top:1000.4px" width="20.6" height="19.6" viewBox="0 0 20 19"><path d="M.6 .6h7.400l4 4v8.600h-11.400z" fill="url(#gp)" stroke="#b9b9d2" stroke-width=".9"/><path d="M8 .6v4h4z" fill="#c9c9e0" stroke="#a9a9c8" stroke-width=".7"/><path d="M7.600 4.900h7.400l4 4v9.100h-11.400z" fill="url(#gp)" stroke="#a8a8c8" stroke-width=".9"/><path d="M15 4.900v4h4z" fill="#bfbfdc" stroke="#9c9cc0" stroke-width=".7"/><path d="M19 9.500v8.500h-11.400" fill="none" stroke="#8e8eb8" stroke-width="1"/></svg>
<svg class="abs" style="left:64.5px;top:1003.0px;opacity:0.85" width="18.0" height="16.0" viewBox="0 0 18 16" fill="#ac3a3a"><path d="M.7 2.700L2.800 .5C7.200 4.600 12.200 9.400 17 13.400L15.900 14.700C10.600 10.700 5.400 6.700 .7 2.700z"/><path d="M16.900 .8L17.700 1.900C12.200 6.200 6.300 11.600 2.500 15.700L.2 13.500C5 9.400 10.900 4.400 16.900 .8z"/></svg>
<div class="abs lc lc2 dv" style="top:995.4px">DVC</div>
<div class="abs lc lc3 dv" style="top:995.4px">dqms_TAGGING_DETAILS</div>
<div class="abs lc lc1" style="top:1027.6px"></div>
<svg class="abs" style="left:34.5px;top:1032.6px" width="20.6" height="19.6" viewBox="0 0 20 19"><path d="M.6 .6h7.400l4 4v8.600h-11.400z" fill="url(#gp)" stroke="#b9b9d2" stroke-width=".9"/><path d="M8 .6v4h4z" fill="#c9c9e0" stroke="#a9a9c8" stroke-width=".7"/><path d="M7.600 4.900h7.400l4 4v9.100h-11.400z" fill="url(#gp)" stroke="#a8a8c8" stroke-width=".9"/><path d="M15 4.900v4h4z" fill="#bfbfdc" stroke="#9c9cc0" stroke-width=".7"/><path d="M19 9.500v8.500h-11.400" fill="none" stroke="#8e8eb8" stroke-width="1"/></svg>
<svg class="abs" style="left:64.5px;top:1035.2px;opacity:0.85" width="18.0" height="16.0" viewBox="0 0 18 16" fill="#ac3a3a"><path d="M.7 2.700L2.800 .5C7.200 4.600 12.200 9.400 17 13.400L15.900 14.700C10.600 10.700 5.400 6.700 .7 2.700z"/><path d="M16.900 .8L17.700 1.900C12.200 6.200 6.300 11.600 2.500 15.700L.2 13.500C5 9.400 10.900 4.400 16.900 .8z"/></svg>
<div class="abs lc lc2 dv" style="top:1027.6px">DVC</div>
<div class="abs lc lc3 dv" style="top:1027.6px">dqms_V_CATCH_VS_RECAPTURE</div>
<div class="abs lc lc1" style="top:1059.8px"></div>
<svg class="abs" style="left:34.5px;top:1064.8px" width="20.6" height="19.6" viewBox="0 0 20 19"><path d="M.6 .6h7.400l4 4v8.600h-11.400z" fill="url(#gp)" stroke="#b9b9d2" stroke-width=".9"/><path d="M8 .6v4h4z" fill="#c9c9e0" stroke="#a9a9c8" stroke-width=".7"/><path d="M7.600 4.900h7.400l4 4v9.100h-11.400z" fill="url(#gp)" stroke="#a8a8c8" stroke-width=".9"/><path d="M15 4.900v4h4z" fill="#bfbfdc" stroke="#9c9cc0" stroke-width=".7"/><path d="M19 9.500v8.500h-11.400" fill="none" stroke="#8e8eb8" stroke-width="1"/></svg>
<svg class="abs" style="left:64.5px;top:1067.4px;opacity:0.85" width="18.0" height="16.0" viewBox="0 0 18 16" fill="#ac3a3a"><path d="M.7 2.700L2.800 .5C7.200 4.600 12.200 9.400 17 13.400L15.900 14.700C10.600 10.700 5.400 6.700 .7 2.700z"/><path d="M16.900 .8L17.700 1.900C12.200 6.200 6.300 11.600 2.500 15.700L.2 13.500C5 9.400 10.900 4.400 16.900 .8z"/></svg>
<div class="abs lc lc2 dv" style="top:1059.8px">DVC</div>
<div class="abs lc lc3 dv" style="top:1059.8px">dqms_V_DATES_HAUL</div>
<div class="abs lc lc1" style="top:1092.0px"></div>
<svg class="abs" style="left:34.5px;top:1097.0px" width="20.6" height="19.6" viewBox="0 0 20 19"><path d="M.6 .6h7.400l4 4v8.600h-11.400z" fill="url(#gp)" stroke="#b9b9d2" stroke-width=".9"/><path d="M8 .6v4h4z" fill="#c9c9e0" stroke="#a9a9c8" stroke-width=".7"/><path d="M7.600 4.900h7.400l4 4v9.100h-11.400z" fill="url(#gp)" stroke="#a8a8c8" stroke-width=".9"/><path d="M15 4.900v4h4z" fill="#bfbfdc" stroke="#9c9cc0" stroke-width=".7"/><path d="M19 9.500v8.500h-11.400" fill="none" stroke="#8e8eb8" stroke-width="1"/></svg>
<svg class="abs" style="left:64.5px;top:1099.6px;opacity:0.85" width="18.0" height="16.0" viewBox="0 0 18 16" fill="#ac3a3a"><path d="M.7 2.700L2.800 .5C7.200 4.600 12.200 9.400 17 13.400L15.900 14.700C10.600 10.700 5.400 6.700 .7 2.700z"/><path d="M16.900 .8L17.700 1.900C12.200 6.200 6.300 11.600 2.500 15.700L.2 13.500C5 9.400 10.900 4.400 16.900 .8z"/></svg>
<div class="abs lc lc2 dv" style="top:1092.0px">DVC</div>
<div class="abs lc lc3 dv" style="top:1092.0px">dqms_V_DATES_SET</div>
<div class="abs lc lc1" style="top:1124.2px"></div>
<svg class="abs" style="left:34.5px;top:1129.2px" width="20.6" height="19.6" viewBox="0 0 20 19"><path d="M.6 .6h7.400l4 4v8.600h-11.400z" fill="url(#gp)" stroke="#b9b9d2" stroke-width=".9"/><path d="M8 .6v4h4z" fill="#c9c9e0" stroke="#a9a9c8" stroke-width=".7"/><path d="M7.600 4.900h7.400l4 4v9.100h-11.400z" fill="url(#gp)" stroke="#a8a8c8" stroke-width=".9"/><path d="M15 4.900v4h4z" fill="#bfbfdc" stroke="#9c9cc0" stroke-width=".7"/><path d="M19 9.500v8.500h-11.400" fill="none" stroke="#8e8eb8" stroke-width="1"/></svg>
<svg class="abs" style="left:64.5px;top:1131.8px;opacity:0.85" width="18.0" height="16.0" viewBox="0 0 18 16" fill="#ac3a3a"><path d="M.7 2.700L2.800 .5C7.200 4.600 12.200 9.400 17 13.400L15.900 14.700C10.600 10.700 5.400 6.700 .7 2.700z"/><path d="M16.900 .8L17.700 1.900C12.200 6.200 6.300 11.600 2.500 15.700L.2 13.500C5 9.400 10.900 4.400 16.900 .8z"/></svg>
<div class="abs lc lc2 dv" style="top:1124.2px">DVC</div>
<div class="abs lc lc3 dv" style="top:1124.2px">dqms_V_DATES_SET_HAUL</div>
<div class="abs lc lc1" style="top:1156.4px"></div>
<svg class="abs" style="left:34.5px;top:1161.4px" width="20.6" height="19.6" viewBox="0 0 20 19"><path d="M.6 .6h7.400l4 4v8.600h-11.400z" fill="url(#gp)" stroke="#b9b9d2" stroke-width=".9"/><path d="M8 .6v4h4z" fill="#c9c9e0" stroke="#a9a9c8" stroke-width=".7"/><path d="M7.600 4.900h7.400l4 4v9.100h-11.400z" fill="url(#gp)" stroke="#a8a8c8" stroke-width=".9"/><path d="M15 4.900v4h4z" fill="#bfbfdc" stroke="#9c9cc0" stroke-width=".7"/><path d="M19 9.500v8.500h-11.400" fill="none" stroke="#8e8eb8" stroke-width="1"/></svg>
<svg class="abs" style="left:64.5px;top:1164.0px;opacity:0.85" width="18.0" height="16.0" viewBox="0 0 18 16" fill="#ac3a3a"><path d="M.7 2.700L2.800 .5C7.200 4.600 12.200 9.400 17 13.400L15.900 14.700C10.600 10.700 5.400 6.700 .7 2.700z"/><path d="M16.900 .8L17.700 1.900C12.200 6.200 6.300 11.600 2.500 15.700L.2 13.500C5 9.400 10.900 4.400 16.900 .8z"/></svg>
<div class="abs lc lc2 dv" style="top:1156.4px">DVC</div>
<div class="abs lc lc3 dv" style="top:1156.4px">dqms_V_OBSERVATIONS</div>
<div id="win" class="abs"></div>
<div id="wtitle" class="abs">DVC Validation Rules for dqm_C1</div>
<svg class="abs" style="left:2172px;top:192px" width="60" height="18" viewBox="0 0 60 18" fill="none" stroke="#fff" stroke-width="1.700">
<path d="M1 14h15.500"/><path d="M22 2.500h14.500v12h-14.500z"/><path d="M42 2l15.500 13.500M57.500 2l-15.500 13.500"/>
</svg>
<div class="abs gb" style="left:509px;width:72px">RUN</div>
<div class="abs gb" style="left:589px;width:72px">LOG</div>
<div class="abs gb" style="left:669px;width:92px">DET LOG</div>
<div class="abs gb" style="left:769px;width:174px;text-align:left;padding-left:14px">RECORDS</div>
<div class="abs dv" style="left:861px;top:225px;width:38px;height:15px;background:#fff;border-radius:2px;font-size:11.800px;line-height:15.500px;padding-left:1px;color:#223">all</div>
<svg class="abs" style="left:905px;top:222px" width="22" height="22" viewBox="0 0 22 22" fill="none" stroke="#fff"><circle cx="8.300" cy="8.300" r="5.800" stroke-width="1.600"/><path d="M12.800 12.800l6 6" stroke-width="3" stroke-linecap="round"/></svg>
<div class="abs gb" style="left:951px;width:162px;text-align:left;padding-left:15px">DVC status</div>
<div class="abs dv" style="left:1054px;top:225px;width:47px;height:15px;background:#fff;border-radius:2px;font-size:11.800px;line-height:16.500px;padding-left:6px;color:#223">A</div>
<div class="abs" style="left:1090px;top:225px;width:11px;height:15px;background:#eee;border-right:1.500px solid #777;border-bottom:1.500px solid #777"></div>
<div class="abs" style="left:1092px;top:230px;border:4px solid transparent;border-top:5px solid #000;border-bottom:0"></div>
<div class="abs gb" style="left:1544px;width:72px">Save</div>
<div id="dsbar" class="abs">Data Set</div>
<div class="abs dh hc" style="left:509px;width:95.500px">Type</div>
<div class="abs dh hc" style="left:608px;width:156px">Host</div>
<div class="abs dh hc" style="left:768px;width:221.500px">Location</div>
<div class="abs dh hc" style="left:993px;width:222px">Name</div>
<div class="abs dh hc" style="left:1219px;width:96px">Delimiter</div>
<div class="abs dh hc" style="left:1319px;width:300px">Record ID</div>
<div class="abs os" style="left:509px;width:95.500px">TABLE<i></i></div>
<div class="abs os" style="left:608px;width:156px">local<i></i></div>
<div class="abs os" style="left:768px;width:221.500px">CCAMLR_STAGE<i></i></div>
<div class="abs os" style="left:993px;width:222px">STG_C1<i></i></div>
<div class="abs os" style="left:1219px;width:96px">NA<i></i></div>
<div class="abs os" style="left:1319px;width:300px;top:313px">ID</div>
<svg class="abs" style="left:1602px;top:320px" width="14" height="9" viewBox="0 0 14 9" fill="none" stroke="#222" stroke-width="2.200"><path d="M1.500 1.500l5.500 5.500 5.500-5.500"/></svg>
<div id="divider" class="abs"></div>
<!-- scrollbar -->
<div class="abs" style="left:2216.500px;top:342px;width:12.500px;height:543px;background:#f6f6f6"></div>
<div class="abs" style="left:2217px;top:360px;width:12px;height:479px;border-radius:6px;background:linear-gradient(90deg,#b4b0ac,#d6d3d0 40%,#cfccc9);border:1px solid #a8a4a0"></div>
<svg class="abs" style="left:2219px;top:347px" width="9" height="6" viewBox="0 0 9 6" fill="none" stroke="#444" stroke-width="1.300"><path d="M.8 5l3.700-3.700 3.700 3.700"/></svg>
<svg class="abs" style="left:2219px;top:871px" width="9" height="6" viewBox="0 0 9 6" fill="none" stroke="#444" stroke-width="1.300"><path d="M.8 1l3.700 3.700 3.700-3.700"/></svg>
<div class="abs" style="left:542px;top:370px;font-size:16.700px;font-weight:bold;color:#2779b7;line-height:19px;white-space:nowrap">AMS DQM DVC RULES</div>
<div class="abs inp" style="left:1744px;top:368.800px;width:244px;height:24.200px"></div>
<div class="abs btn" style="left:1990.500px;top:370px;width:72.500px;height:24px;line-height:22px;box-shadow:0 1px 1px rgba(0,0,0,.12)">Search</div>
<div class="abs btn" style="left:2065px;top:370px;width:61px;height:24px;line-height:22px;box-shadow:0 1px 1px rgba(0,0,0,.12)">Clear</div>
<div class="abs btn" style="left:2136px;top:370px;width:46px;height:25px;line-height:24px;text-align:left;padding-left:10px;font-size:14.300px;color:#333;box-shadow:0 1px 1px rgba(0,0,0,.12)">30</div>
<svg class="abs" style="left:2163px;top:379px" width="11" height="7" viewBox="0 0 11 7" fill="none" stroke="#333" stroke-width="1.800"><path d="M1 1l4.500 4.500 4.500-4.500"/></svg>
<div class="abs btn" style="left:2116px;top:397px;width:69px;height:24px;line-height:22px;color:#d0021b;box-shadow:0 1px 1px rgba(0,0,0,.12)">Delete</div>
<!-- pager top -->
<div class="abs pbtn" style="left:538px;top:434px">&lt;&lt;</div>
<div class="abs pbtn" style="left:590px;top:434px">&lt;</div>
<div class="abs pbtn" style="left:642px;top:434px">&gt;</div>
<div class="abs pbtn" style="left:694px;top:434px">&gt;&gt;</div>
<div class="abs" style="left:745px;top:437px;line-height:18px;white-space:nowrap">Page</div>
<div class="abs psel" style="left:783px;top:432.500px">1</div>
<svg class="abs" style="left:807px;top:443px" width="11" height="7" viewBox="0 0 11 7" fill="none" stroke="#333" stroke-width="1.800"><path d="M1 1l4.500 4.500 4.500-4.500"/></svg>
<div class="abs" style="left:832px;top:437px;line-height:18px;white-space:nowrap">of 1 ( Rec 7 )</div>
<div class="abs rc hc rh" style="left:536px;width:70px;top:467px;height:33.5px"><span></span></div>
<div class="abs rc hc rh" style="left:609px;width:27px;top:467px;height:33.5px"><span></span></div>
<div class="abs rc hc rh" style="left:639px;width:77px;top:467px;height:33.5px"><span>Rule Name</span></div>
<div class="abs rc hc rh" style="left:718px;width:269.5px;top:467px;height:33.5px"><span>Applies To</span></div>
<div class="abs rc hc rh" style="left:990px;width:70px;top:467px;height:33.5px"><span>Rule Type</span></div>
<div class="abs rc hc rh" style="left:1062px;width:112px;top:467px;height:33.5px"><span>Rule Args</span></div>
<div class="abs rc hc rh" style="left:1176px;width:197px;top:467px;height:33.5px"><span>Rule Filter</span></div>
<div class="abs rc hc rh" style="left:1375px;width:677px;top:467px;height:33.5px"><span>Business Rule</span></div>
<div class="abs rc hc rh" style="left:2054px;width:58px;top:467px;height:33.5px"><span>Severity</span></div>
<div class="abs rc hc rh" style="left:2114px;width:57px;top:467px;height:33.5px"><span>rec<br>status</span></div>
<div class="abs btn" style="left:542px;top:472px;width:60px;height:24.5px;line-height:23px;color:#555;font-size:13.2px">Filter</div>
<div class="abs rc dv" style="left:536px;width:70px;top:503.5px;height:19.5px;justify-content:center;padding:3px 0 0 0">Clear</div>
<div class="abs rc dv" style="left:609px;width:1562px;top:503.5px;height:19.5px;padding:3px 0 0 3px">Sorted By: dqm task type ascending, Specification Name ascending, Rule Name ascending</div>
<div class="abs rc dv" style="left:536px;width:70px;top:526px;height:34.5px"><span></span></div>
<div class="abs rc dv" style="left:609px;width:27px;top:526px;height:34.5px"><span></span></div>
<div class="abs rc dv" style="left:639px;width:77px;top:526px;height:34.5px"><span>DQA_0017</span></div>
<div class="abs rc dv" style="left:718px;width:269.5px;top:526px;height:34.5px"><span>SHIP_CODE</span></div>
<div class="abs rc dv" style="left:990px;width:70px;top:526px;height:34.5px"><span>NOTNULL</span></div>
<div class="abs rc dv" style="left:1062px;width:112px;top:526px;height:34.5px"><span></span></div>
<div class="abs rc dv rf" style="left:1176px;width:197px;top:526px;height:34.5px"><span></span></div>
<div class="abs rc dv br" style="left:1375px;width:677px;top:526px;height:34.5px"><span>Individual Trawl activity must have the relevant Vessel recorded (trawl SHIP_CODE may not be NULL)</span></div>
<div class="abs rc dv ctr" style="left:2054px;width:58px;top:526px;height:34.5px"><span>Q</span></div>
<div class="abs rc dv ctr" style="left:2114px;width:57px;top:526px;height:34.5px"><span>A</span></div>
<svg class="abs" style="left:549.8px;top:532.0px" width="19.4" height="18.4" viewBox="0 0 20 19"><path d="M.6 .6h7.400l4 4v8.600h-11.400z" fill="url(#gp)" stroke="#b9b9d2" stroke-width=".9"/><path d="M8 .6v4h4z" fill="#c9c9e0" stroke="#a9a9c8" stroke-width=".7"/><path d="M7.600 4.900h7.400l4 4v9.100h-11.400z" fill="url(#gp)" stroke="#a8a8c8" stroke-width=".9"/><path d="M15 4.900v4h4z" fill="#bfbfdc" stroke="#9c9cc0" stroke-width=".7"/><path d="M19 9.500v8.500h-11.400" fill="none" stroke="#8e8eb8" stroke-width="1"/></svg>
<svg class="abs" style="left:574.6px;top:534.0px;opacity:0.95" width="17.5" height="15.5" viewBox="0 0 18 16" fill="#b81d24"><path d="M.7 2.700L2.800 .5C7.200 4.600 12.200 9.400 17 13.400L15.900 14.700C10.600 10.700 5.400 6.700 .7 2.700z"/><path d="M16.900 .8L17.700 1.900C12.200 6.200 6.300 11.600 2.500 15.700L.2 13.500C5 9.400 10.900 4.400 16.900 .8z"/></svg>
<svg class="abs" style="left:614.5px;top:531.6px" width="18" height="21" viewBox="0 0 18 21"><path d="M1.200 1.700h14.500v18h-14.500z" fill="url(#ge)" stroke="#c3c7d4" stroke-width=".9"/><path d="M1 19.800h15" stroke="#8c93ab" stroke-width="1.100"/><path d="M15.600 2.400L12.300 .4 4.800 12.600 8 14.600z" fill="url(#gy)"/><path d="M4.800 12.600L8 14.600 4.200 16.900z" fill="#dcae80"/><path d="M4.200 16.900l1.300-.8-1-.7z" fill="#6a5a4a"/></svg>
<div class="abs rc dv" style="left:536px;width:70px;top:563px;height:35.5px"><span></span></div>
<div class="abs rc dv" style="left:609px;width:27px;top:563px;height:35.5px"><span></span></div>
<div class="abs rc dv" style="left:639px;width:77px;top:563px;height:35.5px"><span>DQA_0018</span></div>
<div class="abs rc dv" style="left:718px;width:269.5px;top:563px;height:35.5px"><span>HAUL_ID</span></div>
<div class="abs rc dv" style="left:990px;width:70px;top:563px;height:35.5px"><span>NOTNULL</span></div>
<div class="abs rc dv" style="left:1062px;width:112px;top:563px;height:35.5px"><span></span></div>
<div class="abs rc dv rf" style="left:1176px;width:197px;top:563px;height:35.5px"><span>FILTER FISHING_CODE IN 1 2 3 4 5 6 7 8</span></div>
<div class="abs rc dv br" style="left:1375px;width:677px;top:563px;height:35.5px"><span>ndividual Trawl activity must have 'activity number' recorded (trawl HAUL_ID may not be NULL)</span></div>
<div class="abs rc dv ctr" style="left:2054px;width:58px;top:563px;height:35.5px"><span>Q</span></div>
<div class="abs rc dv ctr" style="left:2114px;width:57px;top:563px;height:35.5px"><span>A</span></div>
<svg class="abs" style="left:549.8px;top:569.5px" width="19.4" height="18.4" viewBox="0 0 20 19"><path d="M.6 .6h7.400l4 4v8.600h-11.400z" fill="url(#gp)" stroke="#b9b9d2" stroke-width=".9"/><path d="M8 .6v4h4z" fill="#c9c9e0" stroke="#a9a9c8" stroke-width=".7"/><path d="M7.600 4.900h7.400l4 4v9.100h-11.400z" fill="url(#gp)" stroke="#a8a8c8" stroke-width=".9"/><path d="M15 4.900v4h4z" fill="#bfbfdc" stroke="#9c9cc0" stroke-width=".7"/><path d="M19 9.500v8.500h-11.400" fill="none" stroke="#8e8eb8" stroke-width="1"/></svg>
<svg class="abs" style="left:574.6px;top:571.5px;opacity:0.95" width="17.5" height="15.5" viewBox="0 0 18 16" fill="#b81d24"><path d="M.7 2.700L2.800 .5C7.200 4.600 12.200 9.400 17 13.400L15.900 14.700C10.600 10.700 5.400 6.700 .7 2.700z"/><path d="M16.900 .8L17.700 1.900C12.200 6.200 6.300 11.600 2.500 15.700L.2 13.500C5 9.400 10.900 4.400 16.900 .8z"/></svg>
<svg class="abs" style="left:614.5px;top:569.1px" width="18" height="21" viewBox="0 0 18 21"><path d="M1.200 1.700h14.500v18h-14.500z" fill="url(#ge)" stroke="#c3c7d4" stroke-width=".9"/><path d="M1 19.800h15" stroke="#8c93ab" stroke-width="1.100"/><path d="M15.600 2.400L12.300 .4 4.800 12.600 8 14.600z" fill="url(#gy)"/><path d="M4.800 12.600L8 14.600 4.200 16.900z" fill="#dcae80"/><path d="M4.200 16.900l1.300-.8-1-.7z" fill="#6a5a4a"/></svg>
<div class="abs rc dv" style="left:536px;width:70px;top:600.5px;height:36.0px"><span></span></div>
<div class="abs rc dv" style="left:609px;width:27px;top:600.5px;height:36.0px"><span></span></div>
<div class="abs rc dv" style="left:639px;width:77px;top:600.5px;height:36.0px"><span>DQA_0019</span></div>
<div class="abs rc dv" style="left:718px;width:269.5px;top:600.5px;height:36.0px"><span>SET_END_DATE</span></div>
<div class="abs rc dv" style="left:990px;width:70px;top:600.5px;height:36.0px"><span>NOTNULL</span></div>
<div class="abs rc dv" style="left:1062px;width:112px;top:600.5px;height:36.0px"><span></span></div>
<div class="abs rc dv rf" style="left:1176px;width:197px;top:600.5px;height:36.0px"><span></span></div>
<div class="abs rc dv br" style="left:1375px;width:677px;top:600.5px;height:36.0px"><span></span></div>
<div class="abs rc dv ctr" style="left:2054px;width:58px;top:600.5px;height:36.0px"><span></span></div>
<div class="abs rc dv ctr" style="left:2114px;width:57px;top:600.5px;height:36.0px"><span>A</span></div>
<svg class="abs" style="left:549.8px;top:607.2px" width="19.4" height="18.4" viewBox="0 0 20 19"><path d="M.6 .6h7.400l4 4v8.600h-11.400z" fill="url(#gp)" stroke="#b9b9d2" stroke-width=".9"/><path d="M8 .6v4h4z" fill="#c9c9e0" stroke="#a9a9c8" stroke-width=".7"/><path d="M7.600 4.900h7.400l4 4v9.100h-11.400z" fill="url(#gp)" stroke="#a8a8c8" stroke-width=".9"/><path d="M15 4.900v4h4z" fill="#bfbfdc" stroke="#9c9cc0" stroke-width=".7"/><path d="M19 9.500v8.500h-11.400" fill="none" stroke="#8e8eb8" stroke-width="1"/></svg>
<svg class="abs" style="left:574.6px;top:609.2px;opacity:0.95" width="17.5" height="15.5" viewBox="0 0 18 16" fill="#b81d24"><path d="M.7 2.700L2.800 .5C7.200 4.600 12.200 9.400 17 13.400L15.900 14.700C10.600 10.700 5.400 6.700 .7 2.700z"/><path d="M16.900 .8L17.700 1.900C12.200 6.200 6.300 11.600 2.500 15.700L.2 13.500C5 9.400 10.900 4.400 16.900 .8z"/></svg>
<svg class="abs" style="left:614.5px;top:606.9px" width="18" height="21" viewBox="0 0 18 21"><path d="M1.200 1.700h14.500v18h-14.500z" fill="url(#ge)" stroke="#c3c7d4" stroke-width=".9"/><path d="M1 19.800h15" stroke="#8c93ab" stroke-width="1.100"/><path d="M15.600 2.400L12.300 .4 4.800 12.600 8 14.600z" fill="url(#gy)"/><path d="M4.800 12.600L8 14.600 4.200 16.900z" fill="#dcae80"/><path d="M4.200 16.900l1.300-.8-1-.7z" fill="#6a5a4a"/></svg>
<div class="abs rc dv" style="left:536px;width:70px;top:638.5px;height:36.0px"><span></span></div>
<div class="abs rc dv" style="left:609px;width:27px;top:638.5px;height:36.0px"><span></span></div>
<div class="abs rc dv" style="left:639px;width:77px;top:638.5px;height:36.0px"><span>DQA_0020</span></div>
<div class="abs rc dv" style="left:718px;width:269.5px;top:638.5px;height:36.0px"><span>HAUL_START_DATE</span></div>
<div class="abs rc dv" style="left:990px;width:70px;top:638.5px;height:36.0px"><span>NOTNULL</span></div>
<div class="abs rc dv" style="left:1062px;width:112px;top:638.5px;height:36.0px"><span></span></div>
<div class="abs rc dv rf" style="left:1176px;width:197px;top:638.5px;height:36.0px"><span></span></div>
<div class="abs rc dv br" style="left:1375px;width:677px;top:638.5px;height:36.0px"><span></span></div>
<div class="abs rc dv ctr" style="left:2054px;width:58px;top:638.5px;height:36.0px"><span></span></div>
<div class="abs rc dv ctr" style="left:2114px;width:57px;top:638.5px;height:36.0px"><span>A</span></div>
<svg class="abs" style="left:549.8px;top:645.2px" width="19.4" height="18.4" viewBox="0 0 20 19"><path d="M.6 .6h7.400l4 4v8.600h-11.400z" fill="url(#gp)" stroke="#b9b9d2" stroke-width=".9"/><path d="M8 .6v4h4z" fill="#c9c9e0" stroke="#a9a9c8" stroke-width=".7"/><path d="M7.600 4.900h7.400l4 4v9.100h-11.400z" fill="url(#gp)" stroke="#a8a8c8" stroke-width=".9"/><path d="M15 4.900v4h4z" fill="#bfbfdc" stroke="#9c9cc0" stroke-width=".7"/><path d="M19 9.500v8.500h-11.400" fill="none" stroke="#8e8eb8" stroke-width="1"/></svg>
<svg class="abs" style="left:574.6px;top:647.2px;opacity:0.95" width="17.5" height="15.5" viewBox="0 0 18 16" fill="#b81d24"><path d="M.7 2.700L2.800 .5C7.200 4.600 12.200 9.400 17 13.400L15.900 14.700C10.600 10.700 5.400 6.700 .7 2.700z"/><path d="M16.900 .8L17.700 1.900C12.200 6.200 6.300 11.600 2.500 15.700L.2 13.500C5 9.400 10.900 4.400 16.900 .8z"/></svg>
<svg class="abs" style="left:614.5px;top:644.9px" width="18" height="21" viewBox="0 0 18 21"><path d="M1.200 1.700h14.500v18h-14.500z" fill="url(#ge)" stroke="#c3c7d4" stroke-width=".9"/><path d="M1 19.800h15" stroke="#8c93ab" stroke-width="1.100"/><path d="M15.600 2.400L12.300 .4 4.800 12.600 8 14.600z" fill="url(#gy)"/><path d="M4.800 12.600L8 14.600 4.200 16.900z" fill="#dcae80"/><path d="M4.200 16.900l1.300-.8-1-.7z" fill="#6a5a4a"/></svg>
<div class="abs rc dv" style="left:536px;width:70px;top:676.5px;height:36.0px"><span></span></div>
<div class="abs rc dv" style="left:609px;width:27px;top:676.5px;height:36.0px"><span></span></div>
<div class="abs rc dv" style="left:639px;width:77px;top:676.5px;height:36.0px"><span>DQA_0021</span></div>
<div class="abs rc dv" style="left:718px;width:269.5px;top:676.5px;height:36.0px"><span>HAUL_START_DATE</span></div>
<div class="abs rc dv" style="left:990px;width:70px;top:676.5px;height:36.0px"><span>DGT</span></div>
<div class="abs rc dv" style="left:1062px;width:112px;top:676.5px;height:36.0px"><span>SET_END_DATE</span></div>
<div class="abs rc dv rf" style="left:1176px;width:197px;top:676.5px;height:36.0px"><span></span></div>
<div class="abs rc dv br" style="left:1375px;width:677px;top:676.5px;height:36.0px"><span></span></div>
<div class="abs rc dv ctr" style="left:2054px;width:58px;top:676.5px;height:36.0px"><span></span></div>
<div class="abs rc dv ctr" style="left:2114px;width:57px;top:676.5px;height:36.0px"><span>A</span></div>
<svg class="abs" style="left:549.8px;top:683.2px" width="19.4" height="18.4" viewBox="0 0 20 19"><path d="M.6 .6h7.400l4 4v8.600h-11.400z" fill="url(#gp)" stroke="#b9b9d2" stroke-width=".9"/><path d="M8 .6v4h4z" fill="#c9c9e0" stroke="#a9a9c8" stroke-width=".7"/><path d="M7.600 4.900h7.400l4 4v9.100h-11.400z" fill="url(#gp)" stroke="#a8a8c8" stroke-width=".9"/><path d="M15 4.900v4h4z" fill="#bfbfdc" stroke="#9c9cc0" stroke-width=".7"/><path d="M19 9.500v8.500h-11.400" fill="none" stroke="#8e8eb8" stroke-width="1"/></svg>
<svg class="abs" style="left:574.6px;top:685.2px;opacity:0.95" width="17.5" height="15.5" viewBox="0 0 18 16" fill="#b81d24"><path d="M.7 2.700L2.800 .5C7.200 4.600 12.200 9.400 17 13.400L15.900 14.700C10.600 10.700 5.400 6.700 .7 2.700z"/><path d="M16.900 .8L17.700 1.900C12.200 6.200 6.300 11.600 2.500 15.700L.2 13.500C5 9.400 10.900 4.400 16.900 .8z"/></svg>
<svg class="abs" style="left:614.5px;top:682.9px" width="18" height="21" viewBox="0 0 18 21"><path d="M1.200 1.700h14.500v18h-14.500z" fill="url(#ge)" stroke="#c3c7d4" stroke-width=".9"/><path d="M1 19.800h15" stroke="#8c93ab" stroke-width="1.100"/><path d="M15.600 2.400L12.300 .4 4.800 12.600 8 14.600z" fill="url(#gy)"/><path d="M4.800 12.600L8 14.600 4.200 16.900z" fill="#dcae80"/><path d="M4.200 16.900l1.300-.8-1-.7z" fill="#6a5a4a"/></svg>
<div class="abs rc dv" style="left:536px;width:70px;top:714.5px;height:35.5px"><span></span></div>
<div class="abs rc dv" style="left:609px;width:27px;top:714.5px;height:35.5px"><span></span></div>
<div class="abs rc dv" style="left:639px;width:77px;top:714.5px;height:35.5px"><span>DQA_0022</span></div>
<div class="abs rc dv" style="left:718px;width:269.5px;top:714.5px;height:35.5px"><span>SHIP_CODE+SET_END_DATE+NET_ID</span></div>
<div class="abs rc dv" style="left:990px;width:70px;top:714.5px;height:35.5px"><span>UNIQUE</span></div>
<div class="abs rc dv" style="left:1062px;width:112px;top:714.5px;height:35.5px"><span></span></div>
<div class="abs rc dv rf" style="left:1176px;width:197px;top:714.5px;height:35.5px"><span></span></div>
<div class="abs rc dv br" style="left:1375px;width:677px;top:714.5px;height:35.5px"><span></span></div>
<div class="abs rc dv ctr" style="left:2054px;width:58px;top:714.5px;height:35.5px"><span></span></div>
<div class="abs rc dv ctr" style="left:2114px;width:57px;top:714.5px;height:35.5px"><span>A</span></div>
<svg class="abs" style="left:549.8px;top:721.0px" width="19.4" height="18.4" viewBox="0 0 20 19"><path d="M.6 .6h7.400l4 4v8.600h-11.400z" fill="url(#gp)" stroke="#b9b9d2" stroke-width=".9"/><path d="M8 .6v4h4z" fill="#c9c9e0" stroke="#a9a9c8" stroke-width=".7"/><path d="M7.600 4.900h7.400l4 4v9.100h-11.400z" fill="url(#gp)" stroke="#a8a8c8" stroke-width=".9"/><path d="M15 4.900v4h4z" fill="#bfbfdc" stroke="#9c9cc0" stroke-width=".7"/><path d="M19 9.500v8.500h-11.400" fill="none" stroke="#8e8eb8" stroke-width="1"/></svg>
<svg class="abs" style="left:574.6px;top:723.0px;opacity:0.95" width="17.5" height="15.5" viewBox="0 0 18 16" fill="#b81d24"><path d="M.7 2.700L2.800 .5C7.200 4.600 12.200 9.400 17 13.400L15.900 14.700C10.600 10.700 5.400 6.700 .7 2.700z"/><path d="M16.900 .8L17.700 1.900C12.200 6.200 6.300 11.600 2.500 15.700L.2 13.500C5 9.400 10.900 4.400 16.900 .8z"/></svg>
<svg class="abs" style="left:614.5px;top:720.6px" width="18" height="21" viewBox="0 0 18 21"><path d="M1.200 1.700h14.500v18h-14.500z" fill="url(#ge)" stroke="#c3c7d4" stroke-width=".9"/><path d="M1 19.800h15" stroke="#8c93ab" stroke-width="1.100"/><path d="M15.600 2.400L12.300 .4 4.800 12.600 8 14.600z" fill="url(#gy)"/><path d="M4.800 12.600L8 14.600 4.200 16.900z" fill="#dcae80"/><path d="M4.200 16.900l1.300-.8-1-.7z" fill="#6a5a4a"/></svg>
<div class="abs rc dv" style="left:536px;width:70px;top:752.5px;height:35.5px"><span></span></div>
<div class="abs rc dv" style="left:609px;width:27px;top:752.5px;height:35.5px"><span></span></div>
<div class="abs rc dv" style="left:639px;width:77px;top:752.5px;height:35.5px"><span>DQA_0027</span></div>
<div class="abs rc dv" style="left:718px;width:269.5px;top:752.5px;height:35.5px"><span>HAUL_ID+SHIP_CODE+SET_END_DATE</span></div>
<div class="abs rc dv" style="left:990px;width:70px;top:752.5px;height:35.5px"><span>UNIQUE</span></div>
<div class="abs rc dv" style="left:1062px;width:112px;top:752.5px;height:35.5px"><span></span></div>
<div class="abs rc dv rf" style="left:1176px;width:197px;top:752.5px;height:35.5px"><span></span></div>
<div class="abs rc dv br" style="left:1375px;width:677px;top:752.5px;height:35.5px"><span></span></div>
<div class="abs rc dv ctr" style="left:2054px;width:58px;top:752.5px;height:35.5px"><span></span></div>
<div class="abs rc dv ctr" style="left:2114px;width:57px;top:752.5px;height:35.5px"><span>A</span></div>
<svg class="abs" style="left:549.8px;top:759.0px" width="19.4" height="18.4" viewBox="0 0 20 19"><path d="M.6 .6h7.400l4 4v8.600h-11.400z" fill="url(#gp)" stroke="#b9b9d2" stroke-width=".9"/><path d="M8 .6v4h4z" fill="#c9c9e0" stroke="#a9a9c8" stroke-width=".7"/><path d="M7.600 4.900h7.400l4 4v9.100h-11.400z" fill="url(#gp)" stroke="#a8a8c8" stroke-width=".9"/><path d="M15 4.900v4h4z" fill="#bfbfdc" stroke="#9c9cc0" stroke-width=".7"/><path d="M19 9.500v8.500h-11.400" fill="none" stroke="#8e8eb8" stroke-width="1"/></svg>
<svg class="abs" style="left:574.6px;top:761.0px;opacity:0.95" width="17.5" height="15.5" viewBox="0 0 18 16" fill="#b81d24"><path d="M.7 2.700L2.800 .5C7.200 4.600 12.200 9.400 17 13.400L15.900 14.700C10.600 10.700 5.400 6.700 .7 2.700z"/><path d="M16.900 .8L17.700 1.900C12.200 6.200 6.300 11.600 2.500 15.700L.2 13.500C5 9.400 10.900 4.400 16.900 .8z"/></svg>
<svg class="abs" style="left:614.5px;top:758.6px" width="18" height="21" viewBox="0 0 18 21"><path d="M1.200 1.700h14.500v18h-14.500z" fill="url(#ge)" stroke="#c3c7d4" stroke-width=".9"/><path d="M1 19.800h15" stroke="#8c93ab" stroke-width="1.100"/><path d="M15.600 2.400L12.300 .4 4.800 12.600 8 14.600z" fill="url(#gy)"/><path d="M4.800 12.600L8 14.600 4.200 16.900z" fill="#dcae80"/><path d="M4.200 16.900l1.300-.8-1-.7z" fill="#6a5a4a"/></svg>
<!-- pager bottom -->
<div class="abs pbtn" style="left:538px;top:796px">&lt;&lt;</div>
<div class="abs pbtn" style="left:590px;top:796px">&lt;</div>
<div class="abs pbtn" style="left:642px;top:796px">&gt;</div>
<div class="abs pbtn" style="left:694px;top:796px">&gt;&gt;</div>
<div class="abs" style="left:745px;top:799px;line-height:18px;white-space:nowrap">Page</div>
<div class="abs psel" style="left:783px;top:794.500px">1</div>
<svg class="abs" style="left:807px;top:805px" width="11" height="7" viewBox="0 0 11 7" fill="none" stroke="#333" stroke-width="1.800"><path d="M1 1l4.500 4.500 4.500-4.500"/></svg>
<div class="abs" style="left:832px;top:799px;line-height:18px;white-space:nowrap">of 1 ( Rec 7 )</div>
<div class="abs btn" style="left:538px;top:828.500px;width:94px;height:24px;line-height:22px;box-shadow:0 1px 1px rgba(0,0,0,.12)">Add</div>
<!-- window footer -->
<div class="abs" style="left:500px;top:885px;width:1732px;height:16px;background:#f6f6f6;border-top:1px solid #8f8f8f"></div>
<svg class="abs" style="left:2217px;top:887px" width="14" height="14" viewBox="0 0 14 14" stroke="#8a8a8a" stroke-width="1.200"><path d="M1 13.500L13.500 1M5 13.500L13.500 5M9 13.500l4.500-4.500"/></svg>

<div id="dlg" class="abs"></div>
<div id="dlgf" class="abs"></div>
<svg class="abs" style="left:2103px;top:1157px" width="14" height="14" viewBox="0 0 14 14" stroke="#8a8a8a" stroke-width="1.200"><path d="M1 13.500L13.500 1M5 13.500L13.500 5M9 13.500l4.500-4.500"/></svg>
<div class="abs" style="left:1236px;top:632px;font-size:16.700px;font-weight:bold;color:#2779b7;line-height:19px;white-space:nowrap">DQM RULE</div>
<div class="abs lbl" style="top:684px">Rule Name</div>
<div class="abs lbl" style="top:713px">Applies To</div>
<div class="abs lbl" style="top:775px">Filter</div>
<div class="abs lbl" style="top:837px">Business Rule</div>
<div class="abs lbl" style="top:946px">Severity</div>
<div class="abs lbl" style="top:978px">Rec Status</div>
<div class="abs inp" style="left:1356px;top:680px;width:603.500px;height:23px;line-height:20px">DQA_0018</div>
<div class="abs dhd" style="left:1356px;top:709px;width:233px">Column(s)</div>
<svg class="abs" style="left:1572px;top:717.500px" width="13" height="12" viewBox="0 0 13 12" fill="none" stroke="#e02020" stroke-width="1.400"><path d="M1 1l11 10M12 1L1 11"/></svg>
<div class="abs dhd" style="left:1593px;top:709px;width:128px">Rule Type</div>
<div class="abs dhd" style="left:1725px;top:709px;width:233px">Rule Arguments</div>
<div class="abs inp dsel" style="left:1356px;top:741px;width:233px">HAUL_ID</div>
<div class="abs inp dsel" style="left:1593px;top:741px;width:128px">NOTNULL</div>
<div class="abs inp dsel" style="left:1725px;top:741px;width:233px"></div>
<div class="abs dhd" style="left:1356px;top:771px;width:233px">Column(s)</div>
<div class="abs dhd" style="left:1593px;top:771px;width:128px">Filter Type</div>
<div class="abs dhd" style="left:1725px;top:771px;width:233px">Filter Arguments</div>
<div class="abs inp dsel" style="left:1356px;top:803px;width:233px">FISHING_CODE</div>
<div class="abs inp dsel" style="left:1593px;top:803px;width:128px">IN</div>
<div class="abs inp dsel" style="left:1725px;top:803px;width:233px">1 2 3 4 5 6 7 8</div>
<svg class="abs" style="left:1356px;top:741px" width="604" height="86" viewBox="0 0 604 86" fill="none" stroke="#222" stroke-width="2.200"><path d="M216.500 9l5.500 5.500 5.500-5.500M348 9l5.500 5.500 5.500-5.500M585 9l5.500 5.500 5.500-5.500M216.500 71l5.500 5.500 5.500-5.500M348 71l5.500 5.500 5.500-5.500M585 71l5.500 5.500 5.500-5.500"/></svg>
<div class="abs btn" style="left:1962px;top:771px;width:26px;height:25.500px;line-height:23px;border-radius:3.500px;background:#f2f1f0;font-weight:bold;font-size:17px;color:#333">+</div>
<div class="abs btn" style="left:1962px;top:803.500px;width:26px;height:23px;line-height:20px;border-radius:3.500px;background:#f2f1f0;font-weight:bold;font-size:17px;color:#d0021b">-</div>
<div class="abs inp" style="left:1356px;top:833.500px;width:603.500px;height:102px;white-space:normal;line-height:16px;font-size:14.300px;padding:2px 30px 0 3.5px">ndividual Trawl activity must have 'activity number' recorded (trawl HAUL_ID may not be NULL)</div>
<svg class="abs" style="left:1947px;top:923px" width="11" height="11" viewBox="0 0 11 11" fill="#b0b0b0"><path d="M9 1h1v1h-1zM9 4h1v1h-1zM6 4h1v1h-1zM9 7h1v1h-1zM6 7h1v1h-1zM3 7h1v1h-1zM9 10h1v1h-1zM6 10h1v1h-1zM3 10h1v1h-1zM0 10h1v1h-1z"/></svg>
<div class="abs inp" style="left:1356px;top:942.500px;width:604px;height:25px;line-height:24px;padding-left:6px">Q</div>
<div class="abs inp" style="left:1356px;top:974.500px;width:604px;height:26px;line-height:25px;padding-left:6px">A</div>
<div class="abs oarr" style="left:1947.500px;top:944px;height:23.500px"></div>
<div class="abs oarr" style="left:1947.500px;top:976px;height:24.500px"></div>
<div class="abs btn" style="left:1236px;top:1031px;width:94px;height:28.500px;line-height:26px;border-radius:3.500px;background:#f2f1f0;font-size:14.300px;color:#444">Save</div>
<div class="abs btn" style="left:1336px;top:1031px;width:85px;height:28.500px;line-height:26px;border-radius:3.500px;background:#f2f1f0;font-size:14.300px;color:#444">Exit</div>

</body>
</html>
